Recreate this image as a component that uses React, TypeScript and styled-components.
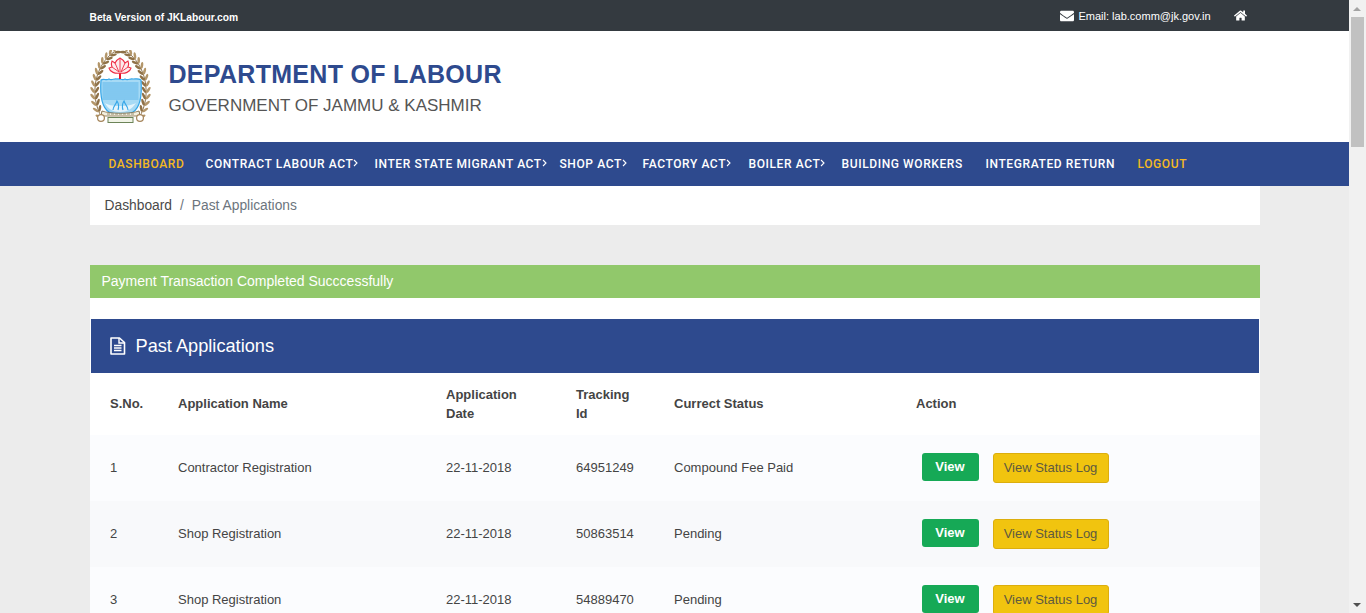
import React from 'react'
import styled, { createGlobalStyle } from 'styled-components'
import { FaEnvelope, FaHome } from 'react-icons/fa'

const GlobalStyle = createGlobalStyle`
  body {
    margin: 0;
    background: #ececec;
    font-family: 'Liberation Sans', Arial, sans-serif;
    color: #444;
  }
`

const navItems = [
  { label: 'DASHBOARD', active: true, width: 97 },
  { label: 'CONTRACT LABOUR ACT', sub: true, width: 169 },
  { label: 'INTER STATE MIGRANT ACT', sub: true, width: 185 },
  { label: 'SHOP ACT', sub: true, width: 83 },
  { label: 'FACTORY ACT', sub: true, width: 106 },
  { label: 'BOILER ACT', sub: true, width: 93 },
  { label: 'BUILDING WORKERS', width: 144 },
  { label: 'INTEGRATED RETURN', width: 152 },
  { label: 'LOGOUT', active: true, width: 70 },
]

const rows = [
  { id: 1, name: 'Contractor Registration', date: '22-11-2018', tracking: '64951249', status: 'Compound Fee Paid' },
  { id: 2, name: 'Shop Registration', date: '22-11-2018', tracking: '50863514', status: 'Pending' },
  { id: 3, name: 'Shop Registration', date: '22-11-2018', tracking: '54889470', status: 'Pending' },
]

// points along the left branch of the wreath, with the direction of the stem
const wreathLeaves = Array.from({ length: 13 }, (_, i) => {
  const t = i / 12
  const u = 1 - t
  const x = u * u * u * 24 + 3 * u * u * t * 6 + 3 * u * t * t * -2 + t * t * t * 12
  const y = u * u * u * 2 + 3 * u * u * t * 14 + 3 * u * t * t * 44 + t * t * t * 68
  const dx = 3 * u * u * (6 - 24) + 6 * u * t * (-2 - 6) + 3 * t * t * (12 + 2)
  const dy = 3 * u * u * (14 - 2) + 6 * u * t * (44 - 14) + 3 * t * t * (68 - 44)
  return { x, y, angle: (Math.atan2(-dy, -dx) * 180) / Math.PI }
})

const Crest = () => (
  <svg width="62" height="74" viewBox="0 0 62 74">
    {[0, 1].map((side) => (
      <g key={side} transform={side ? 'matrix(-1 0 0 1 61 0)' : undefined}>
        <path d="M24 2C6 14-2 44 12 68" fill="none" stroke="#8f744d" strokeWidth="1" />
        {wreathLeaves.map((leaf) => (
          <g key={leaf.y} transform={`translate(${leaf.x} ${leaf.y}) rotate(${leaf.angle})`}>
            <ellipse cx="3" cy="-2.2" rx="3.4" ry="1.3" fill="#b3966a" transform="rotate(-32 3 -2.2)" />
            <ellipse cx="3" cy="2.2" rx="3.4" ry="1.3" fill="#8f7147" transform="rotate(32 3 2.2)" />
          </g>
        ))}
      </g>
    ))}
    <path
      d="M11 30c3-2 5 1 8-1 3 2 5-1 8 0 3-1 5 2 8 0 3 2 5-1 8 0 3 0 5-1 8 1 1 14 0 27-8 32-6 3-18 3-24 0-8-5-9-18-8-32z"
      fill="#a6daf5"
      stroke="#35a6e8"
      strokeWidth="1.2"
    />
    {[33, 35, 37, 39, 41, 43, 45, 47, 49].map((y) => (
      <path key={y} d={`M12.5 ${y}h36`} stroke="#5fb6ea" strokeWidth="1" />
    ))}
    <path d="M15 53c3 6 8 9 15 9s12-3 16-9c-4 2-8 3-16 3s-12-1-15-3z" fill="#e4f4fc" />
    <path d="M23 60c0-4 3-5 4-9 2 3 2 6 1 9M38 60c0-4-3-5-4-9-2 3-2 6-1 9" fill="none" stroke="#35a6e8" strokeWidth="1.1" />
    <path d="M30 29v-9" stroke="#e8132b" strokeWidth="2" />
    <path
      d="M30 23c-5 1-10-1-11-5l3-1c-1-3-1-4 0-6l3 2c1-2 3-4 5-5 2 1 4 3 5 5l3-2c1 2 1 3 0 6l3 1c-1 4-6 6-11 5z"
      fill="#fdeaec"
      stroke="#ee2c44"
      strokeWidth="1.1"
    />
    <path d="M30 9v13M25 13l4 9M35 13l-4 9M22 17l7 5M38 17l-7 5" stroke="#ee2c44" strokeWidth="0.9" fill="none" />
    <path d="M12 61c8 3 29 3 37 0l1 5H11z" fill="#f4f0e0" stroke="#7d6a45" strokeWidth="0.8" />
    <path d="M17 64h27" stroke="#8d8468" strokeWidth="0.9" strokeDasharray="3 1" />
    <rect x="18" y="67.5" width="25" height="5" fill="#f1f4e8" stroke="#6c8458" strokeWidth="1" />
    <circle cx="11" cy="68" r="3.4" fill="#fff" stroke="#a5855a" strokeWidth="1.2" />
    <circle cx="50" cy="68" r="3.4" fill="#fff" stroke="#a5855a" strokeWidth="1.2" />
  </svg>
)

const FileIcon = () => (
  <svg width="17" height="18" viewBox="0 0 17 18">
    <path d="M2 1h8.5L15.5 5.5V17H2z" fill="none" stroke="#fff" strokeWidth="1.6" strokeLinejoin="round" />
    <path d="M10 1v5h5.5" fill="none" stroke="#fff" strokeWidth="1.4" />
    <path d="M5 8.5h7.5M5 11h7.5M5 13.5h7.5" stroke="#fff" strokeWidth="1.4" />
  </svg>
)

const App = () => {
  return (
    <Page>
      <GlobalStyle />
      <TopBar>
        <TopInner>
          <BetaText>Beta Version of JKLabour.com</BetaText>
          <TopLinks>
            <TopLink>
              <FaEnvelope size={14} />
              Email: lab.comm@jk.gov.in
            </TopLink>
            <FaHome size={13} />
          </TopLinks>
        </TopInner>
      </TopBar>
      <Header>
        <Brand>
          <Crest />
          <BrandText>
            <Title>DEPARTMENT OF LABOUR</Title>
            <Subtitle>GOVERNMENT OF JAMMU &amp; KASHMIR</Subtitle>
          </BrandText>
        </Brand>
      </Header>
      <Nav>
        <NavInner>
          {navItems.map((item) => (
            <NavItem key={item.label} $active={item.active} $width={item.width}>
              {item.label}
              {item.sub && (
                <Chevron width="5" height="8" viewBox="0 0 5 8">
                  <path d="M1 1l3 3-3 3" fill="none" stroke="#fff" strokeWidth="1.1" />
                </Chevron>
              )}
            </NavItem>
          ))}
        </NavInner>
      </Nav>
      <Container>
        <Breadcrumb>
          <CrumbLink>Dashboard</CrumbLink>
          <CrumbSep>/</CrumbSep>
          <CrumbCurrent>Past Applications</CrumbCurrent>
        </Breadcrumb>
        <Alert>Payment Transaction Completed Succcessfully</Alert>
        <Card>
          <CardHeader>
            <FileIcon />
            <CardTitle>Past Applications</CardTitle>
          </CardHeader>
          <Table>
            <colgroup>
              <Col $width={68} />
              <Col $width={268} />
              <Col $width={130} />
              <Col $width={98} />
              <Col $width={242} />
              <col />
            </colgroup>
            <thead>
              <tr>
                <Th>S.No.</Th>
                <Th>Application Name</Th>
                <Th>Application Date</Th>
                <Th>Tracking Id</Th>
                <Th>Currect Status</Th>
                <Th>Action</Th>
              </tr>
            </thead>
            <tbody>
              {rows.map((row) => (
                <Row key={row.id}>
                  <Td>{row.id}</Td>
                  <Td>{row.name}</Td>
                  <Td>{row.date}</Td>
                  <Td>{row.tracking}</Td>
                  <Td>{row.status}</Td>
                  <ActionCell>
                    <Actions>
                      <ViewButton>View</ViewButton>
                      <LogButton>View Status Log</LogButton>
                    </Actions>
                  </ActionCell>
                </Row>
              ))}
            </tbody>
          </Table>
        </Card>
      </Container>
      <ScrollBar>
        <ScrollArrow $up />
        <ScrollThumb />
        <ScrollArrow />
      </ScrollBar>
    </Page>
  )
}

const Page = styled.div`
  width: 1349px;
`

const TopBar = styled.div`
  background: #343a40;
  height: 31px;
  color: #fff;
`

const TopInner = styled.div`
  width: 1170px;
  margin: 0 auto;
  height: 100%;
  display: flex;
  align-items: center;
  justify-content: space-between;
`

const BetaText = styled.div`
  font-weight: 700;
  font-size: 10.25px;
  padding-top: 3px;
`

const TopLinks = styled.div`
  display: flex;
  align-items: center;
  gap: 23px;
  padding-right: 13px;
`

const TopLink = styled.div`
  display: flex;
  align-items: center;
  gap: 5px;
  font-size: 11px;
`

const Header = styled.header`
  background: #fff;
  height: 111px;
`

const Brand = styled.div`
  width: 1170px;
  margin: 0 auto;
  height: 100%;
  display: flex;
  align-items: center;
  gap: 18px;
`

const BrandText = styled.div`
  display: flex;
  flex-direction: column;
  gap: 7px;
  padding-top: 2px;
`

const Title = styled.h1`
  margin: 0 0 0 -1px;
  font-size: 25px;
  line-height: 30px;
  font-weight: 700;
  letter-spacing: 0.3px;
  color: #2e4a8e;
`

const Subtitle = styled.div`
  margin-left: -1px;
  font-size: 17px;
  line-height: 20px;
  color: #555;
`

const Nav = styled.nav`
  background: #2e4a8e;
  height: 44px;
`

const NavInner = styled.div`
  width: 1170px;
  margin: 0 auto;
  height: 100%;
  display: flex;
  align-items: center;
  padding-left: 19px;
  box-sizing: border-box;
`

const NavItem = styled.a<{ $active?: boolean; $width: number }>`
  display: flex;
  align-items: center;
  flex: none;
  width: ${(p) => p.$width}px;
  font-family: Roboto, 'Liberation Sans', sans-serif;
  font-size: 12px;
  font-weight: 500;
  letter-spacing: 0.6px;
  color: ${(p) => (p.$active ? '#f4b922' : '#fff')};
`

const Chevron = styled.svg`
  margin-top: -3px;
`

const Container = styled.main`
  width: 1170px;
  margin: 0 auto;
`

const Breadcrumb = styled.div`
  background: #fff;
  height: 39px;
  display: flex;
  align-items: center;
  padding-left: 15px;
  font-size: 13.8px;
  margin-bottom: 40px;
`

const CrumbLink = styled.span`
  color: #4a4a4a;
`

const CrumbSep = styled.span`
  color: #6c757d;
  padding: 0 8px;
`

const CrumbCurrent = styled.span`
  color: #6c757d;
`

const Alert = styled.div`
  background: #91c86b;
  color: #fff;
  height: 33px;
  line-height: 33px;
  padding-left: 12px;
  font-size: 14px;
`

const Card = styled.section`
  background: #fff;
  padding-top: 21px;
`

const CardHeader = styled.div`
  margin: 0 1px;
  background: #2e4a8e;
  height: 54px;
  display: flex;
  align-items: center;
  gap: 10px;
  padding-left: 18px;
  color: #fff;
`

const CardTitle = styled.h2`
  margin: 0;
  font-size: 18.2px;
  font-weight: 400;
`

const Table = styled.table`
  width: 100%;
  table-layout: fixed;
  border-collapse: collapse;
  font-size: 13px;
`

const Col = styled.col<{ $width: number }>`
  width: ${(p) => p.$width}px;
`

const Th = styled.th`
  height: 61px;
  padding: 0 19.5px 1px 20.5px;
  text-align: left;
  font-weight: 700;
  line-height: 19px;
  color: #444;
`

const Row = styled.tr`
  height: 66px;
  &:nth-child(odd) {
    background: #fbfcfe;
  }
  &:nth-child(even) {
    background: #f8f9fb;
  }
`

const Td = styled.td`
  padding: 0 0 2px 20.5px;
  color: #444;
`

const ActionCell = styled.td`
  padding: 0 0 0 20px;
`

const Actions = styled.div`
  display: flex;
  align-items: flex-start;
  gap: 14px;
  padding-left: 6px;
`

const ViewButton = styled.button`
  width: 57px;
  height: 28px;
  padding: 0 0 2px;
  border: 0;
  border-radius: 3px;
  background: #16a956;
  color: #fff;
  font: 700 13px 'Liberation Sans', sans-serif;
`

const LogButton = styled.button`
  width: 116px;
  height: 30px;
  padding: 0 0 2px;
  border: 1px solid #dcae0d;
  border-radius: 3px;
  background: #f1c40f;
  color: #5e5a40;
  font: 400 13px 'Liberation Sans', sans-serif;
`

const ScrollBar = styled.div`
  position: fixed;
  top: 0;
  right: 0;
  bottom: 0;
  width: 17px;
  background: #f1f1f1;
  display: flex;
  flex-direction: column;
  align-items: center;
`

const ScrollArrow = styled.div<{ $up?: boolean }>`
  flex: none;
  height: 17px;
  width: 9px;
  display: flex;
  align-items: center;
  margin-top: ${(p) => (p.$up ? '0' : 'auto')};
  &::before {
    content: '';
    border-left: 4px solid transparent;
    border-right: 4px solid transparent;
    border-bottom: ${(p) => (p.$up ? '4px solid #a3a3a3' : '0')};
    border-top: ${(p) => (p.$up ? '0' : '4px solid #505050')};
  }
`

const ScrollThumb = styled.div`
  flex: none;
  width: 13px;
  height: 130px;
  background: #c1c1c1;
`

export default App
